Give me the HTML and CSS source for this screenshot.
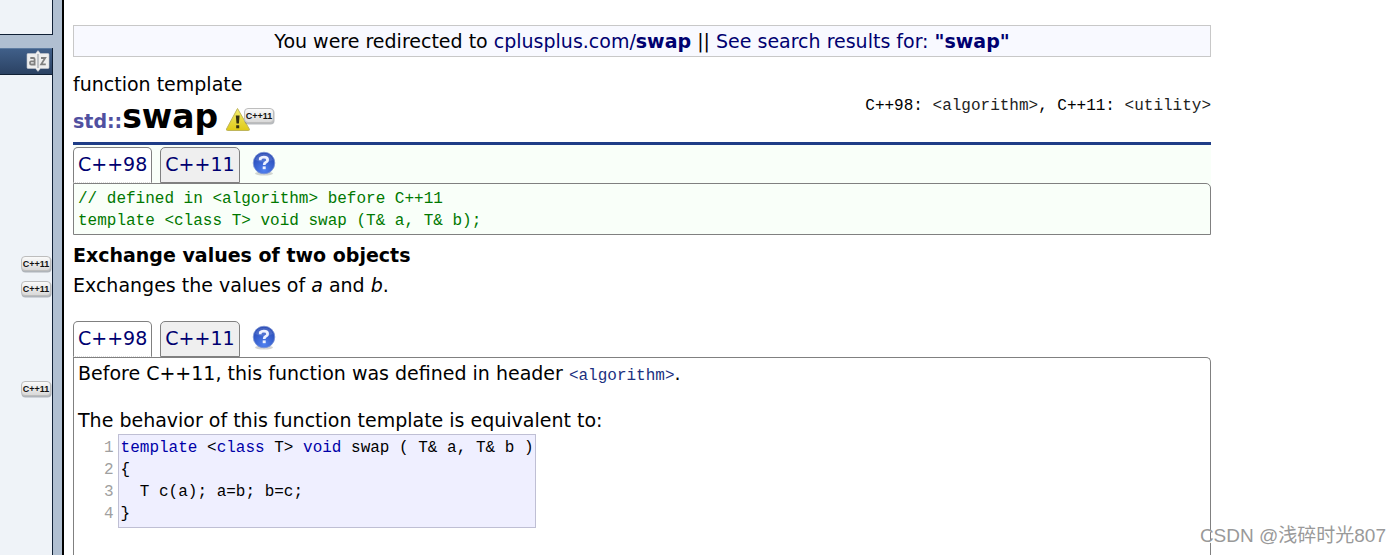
FILE: index.html
```html
<!DOCTYPE html>
<html lang="en">
<head>
<meta charset="utf-8">
<title>swap - C++ Reference</title>
<link rel="stylesheet" href="styles.css">
</head>
<body>
<svg class="defs" width="0" height="0" aria-hidden="true">
  <defs>
    <linearGradient id="badge-fill" x1="0" y1="0" x2="0" y2="1"><stop offset="0" stop-color="#fbfbfb"/><stop offset="1" stop-color="#d8d8d8"/></linearGradient>
    <linearGradient id="warn-fill" x1="0" y1="0" x2="0" y2="1"><stop offset="0" stop-color="#f3ed70"/><stop offset="1" stop-color="#dfc916"/></linearGradient>
    <radialGradient id="help-fill" cx=".5" cy=".85" r=".85"><stop offset="0" stop-color="#4f80ef"/><stop offset="1" stop-color="#2444b0"/></radialGradient>
    <symbol id="badge" viewBox="0 0 32 18">
      <rect x="1.500" y="2" width="30" height="15.500" rx="4" fill="#70757c" opacity=".5"/>
      <rect x="1.500" y="1.500" width="29" height="14" rx="3.500" fill="url(#badge-fill)" stroke="#bdbdbd"/>
      <text class="badge-text" x="16" y="12" text-anchor="middle">C++11</text>
    </symbol>
    <symbol id="help" viewBox="0 0 24 26">
      <ellipse cx="12" cy="22.5" rx="9" ry="2" fill="#888" opacity=".35"/>
      <circle cx="12" cy="12" r="10.8" fill="url(#help-fill)" stroke="#7f97d6" stroke-width=".8"/>
      <path d="M3 9a9.5 9.5 0 0 1 18 0q-9 4-18 0z" fill="#fff" opacity=".13"/>
      <path d="M8.300 9.300V7.300q1-1.200 3.500-1.200 3.800 0 3.800 2.800 0 1.600-1.700 2.400-1.700.8-1.700 2.600" fill="none" stroke="#eef2ff" stroke-width="2.800"/>
      <path d="M10.700 15.400h3v2.800h-3z" fill="#eef2ff"/>
    </symbol>
  </defs>
</svg>
<div class="page">
  <aside class="sidebar">
    <div class="box-end"></div>
    <section class="box">
      <header class="box-head">
        <svg width="24" height="22" viewBox="0 0 24 22" role="img" aria-label="Sort alphabetically">
          <path d="M2 3.500h7.500L12 .6l2.500 2.900H22q1 0 1 1v13q0 1-1 1h-7.500L12 21.400l-2.500-2.900H2q-1 0-1-1v-13q0-1 1-1z" fill="#eeeeee" stroke="#c4c8ce" stroke-width=".6"/>
          <path d="M12 4v14" stroke="#8e959e" stroke-width="1"/>
          <path d="M4.300 8h3q1.300 0 1.300 1.300V14.500H5.200q-1.200 0-1.200-1.600t1.200-1.500h3.400M15 8h4.200l-4 6.300h4.600" fill="none" stroke="#808080" stroke-width="1.800"/>
        </svg>
      </header>
      <ul class="list">
        <li></li><li></li><li></li><li></li><li></li><li></li><li></li>
        <li><svg class="badge"><use href="#badge"/></svg></li>
        <li><svg class="badge"><use href="#badge"/></svg></li>
        <li></li><li></li><li></li>
        <li><svg class="badge"><use href="#badge"/></svg></li>
      </ul>
    </section>
  </aside>
  <main class="main">
    <p class="notice">You were redirected to <a href="#">cplusplus.com/<b>swap</b></a> || <a href="#">See search results for: <b>"swap"</b></a></p>
    <div class="kind">function template</div>
    <header class="title">
      <h1><span class="ns">std::</span>swap</h1>
      <span class="flags">
        <svg class="warn" width="26" height="25" viewBox="0 0 26 25" role="img" aria-label="Warning">
          <path d="M12.500 1.500L1.500 22q-.4 1.500 1 1.500h21q1.300 0 .8-1.500z" fill="url(#warn-fill)" stroke="#bfb55a"/>
          <path d="M10.800 8.500h3.800l-.7 8h-2.400zM11.200 18.300h3v3h-3z" fill="#332f12"/>
        </svg>
        <svg class="badge"><use href="#badge"/></svg>
      </span>
      <div class="headers">C++98: <a href="#">&lt;algorithm&gt;</a>, C++11: <a href="#">&lt;utility&gt;</a></div>
    </header>
    <section class="proto">
      <div class="tabs">
        <button class="tab active">C++98</button>
        <button class="tab">C++11</button>
        <a class="help" href="#" aria-label="Help"><svg width="24" height="26"><use href="#help"/></svg></a>
      </div>
      <pre class="panel">// defined in &lt;algorithm&gt; before C++11
template &lt;class T&gt; void swap (T&amp; a, T&amp; b);</pre>
    </section>
    <h2 class="summary">Exchange values of two objects</h2>
    <p class="text">Exchanges the values of <i>a</i> and <i>b</i>.</p>
    <section class="details">
      <div class="tabs">
        <button class="tab active">C++98</button>
        <button class="tab">C++11</button>
        <a class="help" href="#" aria-label="Help"><svg width="24" height="26"><use href="#help"/></svg></a>
      </div>
      <div class="panel">
        <p>Before C++11, this function was defined in header <a class="code-link" href="#">&lt;algorithm&gt;</a>.</p>
        <p>The behavior of this function template is equivalent to:</p>
        <div class="listing">
          <pre class="lines">1
2
3
4</pre>
          <pre class="source"><b>template</b> &lt;<b>class</b> T&gt; <b>void</b> swap ( T&amp; a, T&amp; b )
{
  T c(a); a=b; b=c;
}</pre>
        </div>
      </div>
    </section>
  </main>
</div>
<div class="watermark">CSDN @浅碎时光807</div>
</body>
</html>
```
FILE: styles.css
```css
* { box-sizing: border-box; }
body {
  margin: 0;
  height: 100vh;
  overflow: hidden;
  background: #fff;
  color: #000;
  font: 19px/24px Verdana, "DejaVu Sans", sans-serif;
}
a { color: #000070; text-decoration: none; }
p, h1, h2, pre, ul { margin: 0; padding: 0; }
pre, .headers, .code-link { font-family: "Liberation Mono", monospace; font-size: 16px; }
svg { display: block; flex: none; }
.defs { position: absolute; }
.page { display: flex; min-height: 100vh; }

.sidebar {
  display: flex;
  flex-direction: column;
  gap: 13px;
  flex: none;
  width: 64px;
  padding-right: 9px;
  border-right: 2px solid #000;
  background: #b0bfd1;
}
.box-end {
  height: 35px;
  background: #eff3f8;
  border: solid #102035;
  border-width: 0 1px 1px 0;
}
.box {
  flex: 1;
  background: #eff3f8;
  border-right: 1px solid #102035;
}
.box-head {
  display: flex;
  align-items: flex-start;
  justify-content: flex-end;
  height: 27px;
  padding: 1px 2px 0 0;
  background: linear-gradient(#405f89, #2b4263);
  border-top: 1px solid #5d7ba0;
  border-bottom: 1px solid #102035;
}
.list { list-style: none; padding-top: 1px; }
.list li {
  display: flex;
  align-items: center;
  justify-content: flex-end;
  height: 25px;
}
.badge { width: 32px; height: 18px; }
.badge-text { font: bold 9px "Liberation Sans", sans-serif; fill: #111; }

.main {
  display: flex;
  flex-direction: column;
  flex: 1;
  min-width: 0;
  margin: 25px 189px 0 9px;
}
.notice {
  padding: 3px;
  border: 1px solid #c8c8c8;
  background: #f8f9ff;
  text-align: center;
}
.kind { margin-top: 15px; }
.title {
  display: flex;
  align-items: center;
  height: 49px;
  border-bottom: 3px solid #1f3d87;
}
.title h1 { font-size: 33px; line-height: 40px; }
.ns { font-size: 19px; color: #5050a0; }
.flags { display: flex; align-items: flex-start; margin-left: 7px; }
.flags .badge { margin-left: -8px; }
.headers { margin-left: auto; align-self: flex-start; line-height: 20px; }
.headers a { color: #222; }

.proto { background: #f9fff9; padding-top: 2px; }
.tabs { display: flex; align-items: flex-start; gap: 8px; height: 36px; }
.tab {
  height: 36px;
  padding: 0 4px 2px;
  border: 1px solid #808080;
  border-radius: 5px 5px 0 0;
  background: #efefef;
  color: #000070;
  font: inherit;
}
.tab.active { background: #fff; border-bottom: 1px dotted #ddd; }
.help { margin: 4px 0 0 4px; }
.panel { border: 1px solid #808080; border-radius: 0 5px 0 0; padding: 3px 4px; }
.proto .panel { height: 52px; padding-top: 4px; color: #007800; line-height: 22px; }
.summary { margin-top: 8px; font-size: 19px; line-height: 24px; }
.text { margin-top: 6px; }
.details { flex: 1; margin-top: 24px; display: flex; flex-direction: column; }
.details .panel { flex: 1; border-bottom: 0; }
.details p + p { margin-top: 23px; }
.listing { display: flex; gap: 4px; margin: 2px 0 0 26px; line-height: 22px; }
.lines { padding-top: 3px; color: #a0a0a0; }
.source { padding: 2px; border: 1px solid #bfbfd4; background: #efefff; }
.source b { font-weight: normal; color: #0000a8; }
.code-link { color: #203080; line-height: 16px; }
.watermark {
  position: absolute;
  right: 14px;
  bottom: 6px;
  color: #999;
  font: 19px/26px "Liberation Sans", "Noto Sans CJK SC", sans-serif;
  text-shadow: 1px 1px 0 #fff;
}
```
